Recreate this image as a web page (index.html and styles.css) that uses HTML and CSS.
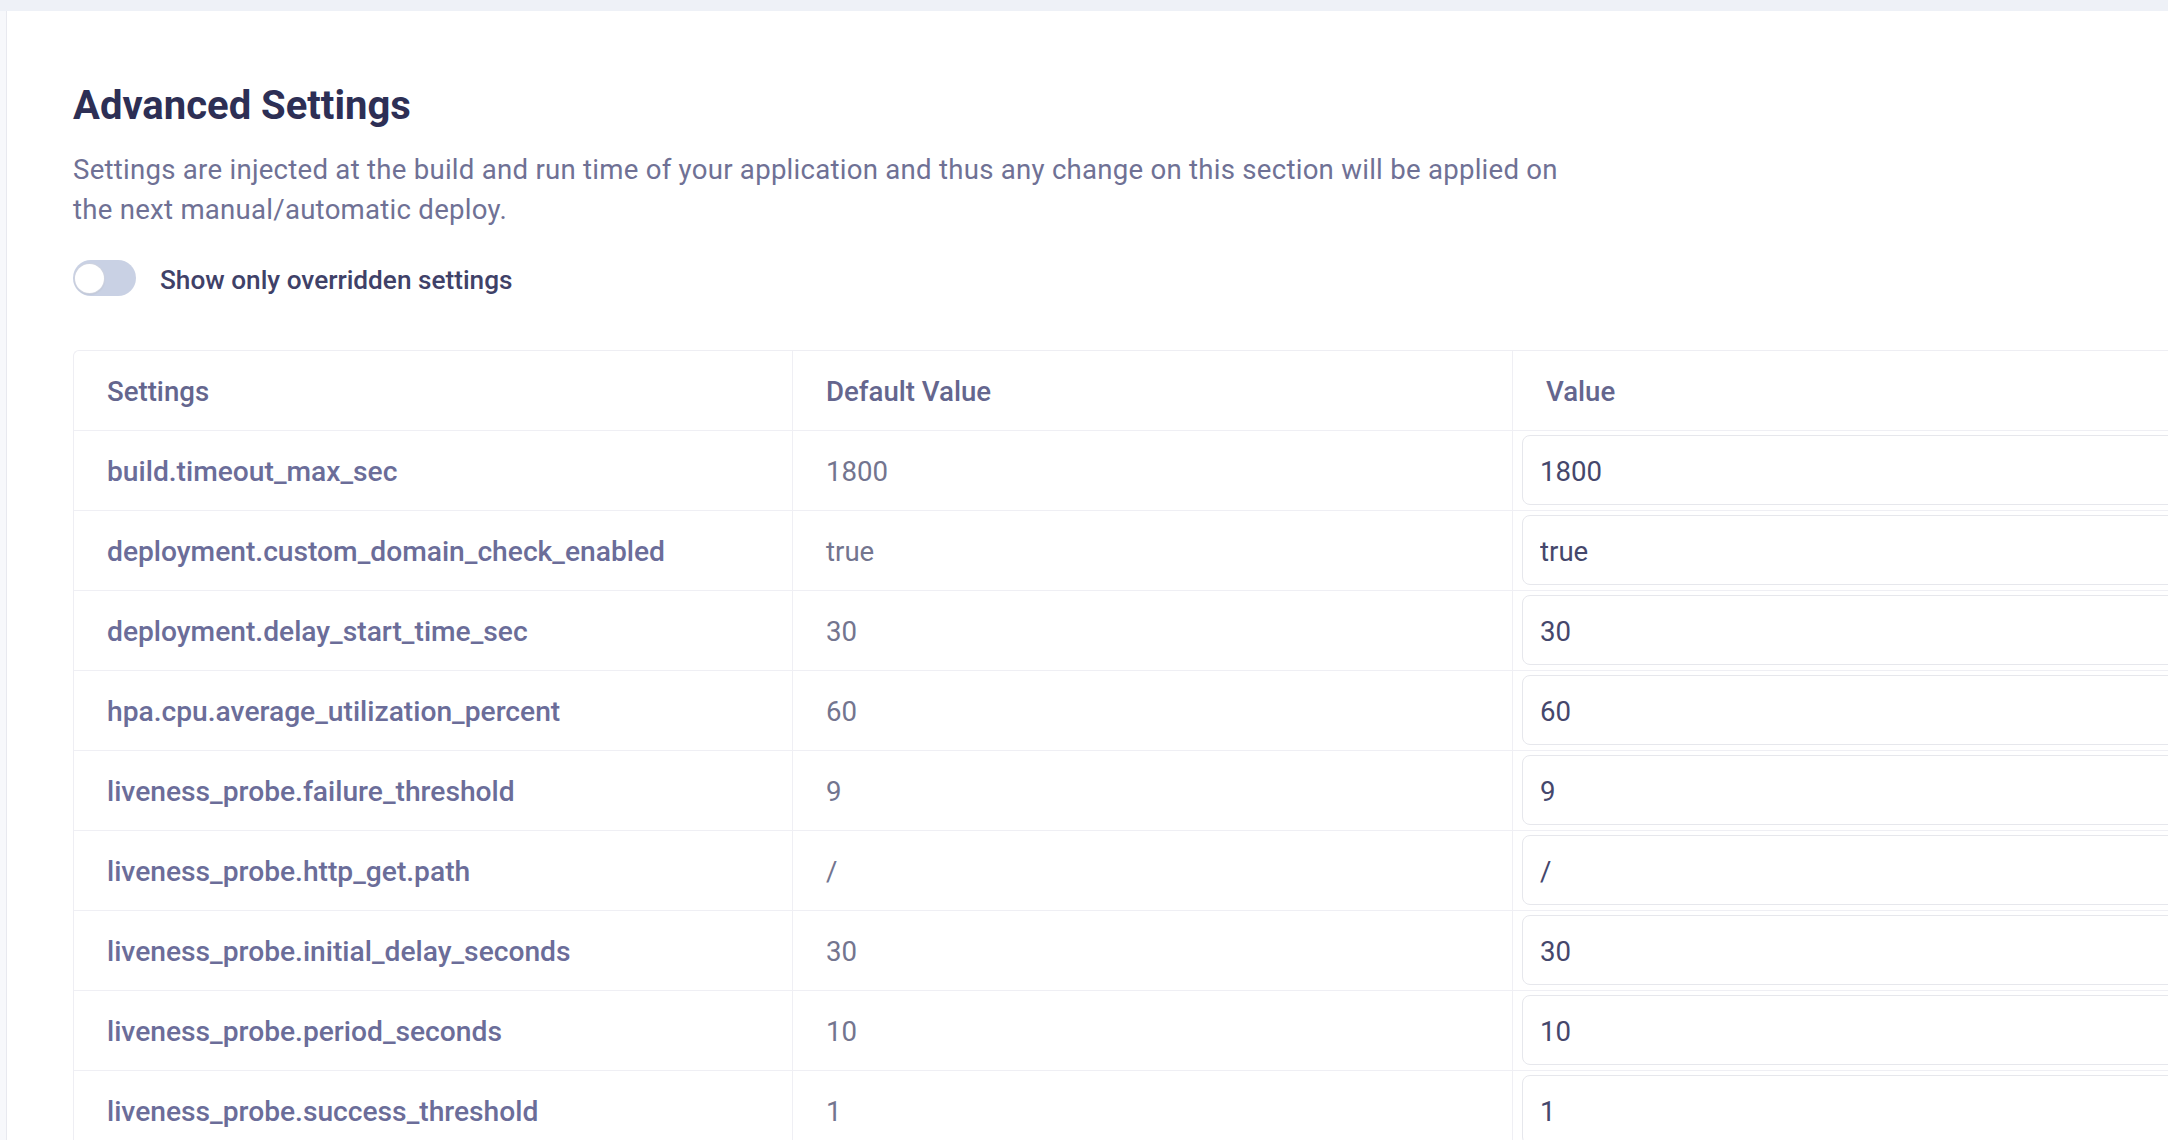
FILE: index.html
```html
<!DOCTYPE html>
<html lang="en">
<head>
    <meta charset="UTF-8">
    <meta name="viewport" content="width=device-width, initial-scale=1.0">
    <title>Advanced Settings</title>
    <link rel="stylesheet" href="styles.css">
</head>
<body>
    <div class="topbar"></div>
    <div class="layout">
        <div class="rail"></div>
        <main class="panel">
            <h1>Advanced Settings</h1>
            <p class="desc">Settings are injected at the build and run time of your application and thus any change on this section will be applied on the next manual/automatic deploy.</p>

            <label class="switch-row">
                <span class="switch"><span class="knob"></span></span>
                <span class="switch-label">Show only overridden settings</span>
            </label>

            <div class="settings-table">
                <div class="row head">
                    <div class="cell">Settings</div>
                    <div class="cell">Default Value</div>
                    <div class="cell">Value</div>
                </div>
                <div class="row">
                    <div class="cell name">build.timeout_max_sec</div>
                    <div class="cell default">1800</div>
                    <div class="cell value"><input type="text" value="1800"></div>
                </div>
                <div class="row">
                    <div class="cell name">deployment.custom_domain_check_enabled</div>
                    <div class="cell default">true</div>
                    <div class="cell value"><input type="text" value="true"></div>
                </div>
                <div class="row">
                    <div class="cell name">deployment.delay_start_time_sec</div>
                    <div class="cell default">30</div>
                    <div class="cell value"><input type="text" value="30"></div>
                </div>
                <div class="row">
                    <div class="cell name">hpa.cpu.average_utilization_percent</div>
                    <div class="cell default">60</div>
                    <div class="cell value"><input type="text" value="60"></div>
                </div>
                <div class="row">
                    <div class="cell name">liveness_probe.failure_threshold</div>
                    <div class="cell default">9</div>
                    <div class="cell value"><input type="text" value="9"></div>
                </div>
                <div class="row">
                    <div class="cell name">liveness_probe.http_get.path</div>
                    <div class="cell default">/</div>
                    <div class="cell value"><input type="text" value="/"></div>
                </div>
                <div class="row">
                    <div class="cell name">liveness_probe.initial_delay_seconds</div>
                    <div class="cell default">30</div>
                    <div class="cell value"><input type="text" value="30"></div>
                </div>
                <div class="row">
                    <div class="cell name">liveness_probe.period_seconds</div>
                    <div class="cell default">10</div>
                    <div class="cell value"><input type="text" value="10"></div>
                </div>
                <div class="row">
                    <div class="cell name">liveness_probe.success_threshold</div>
                    <div class="cell default">1</div>
                    <div class="cell value"><input type="text" value="1"></div>
                </div>
            </div>
        </main>
    </div>
</body>
</html>
```

FILE: styles.css
```css
body {
    margin: 0;
    font-family: Roboto, 'Liberation Sans', sans-serif;
    background-color: #f7f8fb;
    overflow: hidden;
    height: 1140px;
}
.topbar {
    height: 11px;
    background-color: #eef1f7;
}
.layout {
    display: flex;
    height: 1129px;
}
.rail {
    width: 6px;
    flex: none;
}
.panel {
    flex: 1;
    min-width: 0;
    background-color: #fff;
    border-left: 1px solid #e8e9ef;
    padding: 71px 0 0 66px;
}
h1 {
    margin: 0;
    font-size: 40px;
    line-height: 48px;
    font-weight: 700;
    color: #2d2f55;
}
.desc {
    margin: 20px 0 0;
    max-width: 1510px;
    font-size: 27.6px;
    line-height: 40px;
    letter-spacing: 0.25px;
    color: #6f7195;
}
.switch-row {
    display: flex;
    align-items: center;
    gap: 24px;
    margin-top: 30px;
    height: 36px;
    cursor: pointer;
}
.switch {
    display: flex;
    align-items: center;
    width: 63px;
    height: 36px;
    padding: 0 2px;
    box-sizing: border-box;
    border-radius: 18px;
    background-color: #c9d1e4;
}
.knob {
    width: 29px;
    height: 29px;
    border-radius: 50%;
    background-color: #fff;
    box-shadow: 0 0 0 1px #cfd3df, 0 1px 2px rgba(0,0,0,0.15);
}
.switch-label {
    font-size: 26.2px;
    font-weight: 500;
    color: #3f4168;
    padding-top: 3px;
}
.settings-table {
    margin-top: 54px;
    width: 2160px;
    border: 1px solid #eeeef3;
    border-radius: 6px;
    border-right: none;
}
.row {
    display: grid;
    grid-template-columns: 719px 720px 1fr;
    height: 80px;
    box-sizing: border-box;
    border-bottom: 1px solid #efeff4;
}
.cell {
    display: flex;
    align-items: center;
    padding: 2px 0 0 33px;
    border-right: 1px solid #efeff4;
    font-size: 27.6px;
    white-space: nowrap;
}
.cell:last-child {
    border-right: none;
}
.head .cell {
    font-weight: 500;
    color: #64668e;
}
.name {
    font-size: 28.2px;
    font-weight: 500;
    color: #6b6d99;
}
.default {
    color: #73758f;
}
.cell.value {
    padding: 4px 0 5px 9px;
    align-items: stretch;
}
.value input {
    width: 100%;
    margin: 0;
    padding: 2px 0 0 17px;
    box-sizing: border-box;
    border: 1.5px solid #e6e7ec;
    border-radius: 8px;
    font-family: Roboto, 'Liberation Sans', sans-serif;
    font-size: 27.6px;
    color: #45476c;
    background-color: #fff;
    outline: none;
}
```
